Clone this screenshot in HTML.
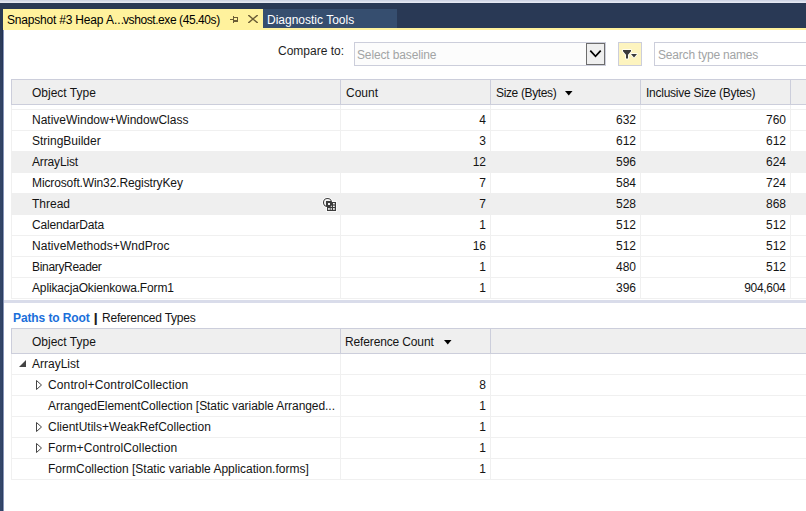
<!DOCTYPE html>
<html><head><meta charset="utf-8">
<style>
*{margin:0;padding:0;box-sizing:border-box}
html,body{width:806px;height:511px;overflow:hidden;background:#fff}
body{position:relative;font-family:"Liberation Sans",sans-serif;font-size:12px;color:#141414}
.a{position:absolute}
.t{position:absolute;white-space:nowrap;line-height:14px}
.r{text-align:right}
</style></head><body>
<!-- top chrome -->
<div class="a" style="left:0;top:0;width:806px;height:1px;background:#cfd5e5"></div><div class="a" style="left:0;top:1px;width:806px;height:1px;background:#dadfeb"></div><div class="a" style="left:0;top:2px;width:806px;height:1px;background:#e5e8f3"></div>
<div class="a" style="left:0;top:3px;width:806px;height:25px;background:#293955"></div>
<div class="a" style="left:0;top:28px;width:2px;height:483px;background:linear-gradient(#2b3a57 0px,#324465 70px,#34476a 483px)"></div>
<div class="a" style="left:2px;top:28px;width:1px;height:483px;background:linear-gradient(#213052 0px,#2c3e60 70px,#2d3f62 483px)"></div>
<div class="a" style="left:3px;top:30px;width:1px;height:481px;background:#8896b9"></div>
<div class="a" style="left:3px;top:28px;width:803px;height:2px;background:#fff29d"></div>
<div class="a" style="left:3px;top:9px;width:260px;height:21px;background:#fff29d"></div>
<div class="t" style="left:7px;top:13px;color:#000;letter-spacing:-0.2px">Snapshot #3 Heap</div>
<div class="t" style="left:106px;top:13px;color:#000">A...</div>
<div class="t" style="left:123px;top:13px;color:#000;letter-spacing:-0.42px">vshost.exe (45.40s)</div>
<!-- pin icon -->
<svg class="a" style="left:230px;top:16px" width="8" height="7" viewBox="0 0 8 7" shape-rendering="crispEdges">
<rect x="0" y="3" width="3" height="1" fill="#6b5d36"/>
<rect x="3" y="0" width="1" height="7" fill="#6b5d36"/>
<rect x="4" y="1" width="4" height="1" fill="#6b5d36"/>
<rect x="7" y="1" width="1" height="5" fill="#6b5d36"/>
<rect x="4" y="4" width="4" height="2" fill="#6b5d36"/>
</svg>
<!-- close icon -->
<svg class="a" style="left:248px;top:15px" width="10" height="8" viewBox="0 0 10 8">
<path d="M0.3 0L9.7 8M9.7 0L0.3 8" fill="none" stroke="#6b5d36" stroke-width="1.4"/>
</svg>
<div class="a" style="left:263px;top:9px;width:134px;height:19px;background:#364e6f"></div>
<div class="t" style="left:267px;top:13px;color:#fff">Diagnostic Tools</div>

<!-- toolbar -->
<div class="t" style="left:278px;top:44px;color:#1e1e1e">Compare to:</div>
<div class="a" style="left:354px;top:42px;width:252px;height:24px;border:1px solid #cccedb;background:#fcfcfc"></div>
<div class="t" style="left:357px;top:48px;color:#a2a4a5;letter-spacing:-0.14px">Select baseline</div>
<div class="a" style="left:586px;top:43px;width:19px;height:22px;border:1px solid #6d6d6d;background:#efefef"></div>
<svg class="a" style="left:588px;top:48px" width="15" height="12" viewBox="0 0 15 12">
<path d="M2.3 2.6L7.5 8.3L12.7 2.6" fill="none" stroke="#000" stroke-width="1.7"/>
</svg>
<div class="a" style="left:618px;top:42px;width:24px;height:24px;border:1px solid #cccedb;background:#fdf4bf"></div>
<svg class="a" style="left:620px;top:46px" width="20" height="16" viewBox="0 0 20 16">
<path d="M3 4H11V5.3L8 8.8V12.6H6V8.8L3 5.3Z" fill="#3a3a3a" stroke="#fff" stroke-width="1.6" paint-order="stroke" stroke-linejoin="round"/>
<path d="M11 8H17L14 11.5Z" fill="#3a3a3a" stroke="#fff" stroke-width="1.4" paint-order="stroke" stroke-linejoin="round"/>
</svg>
<div class="a" style="left:654px;top:42px;width:160px;height:24px;border:1px solid #cccedb;background:#fff"></div>
<div class="t" style="left:658px;top:48px;color:#a2a4a5;letter-spacing:-0.19px">Search type names</div>

<!-- grid 1 header -->
<div class="a" style="left:11px;top:79px;width:800px;height:26px;border:1px solid #cccedb;background:#efefef"></div>
<div class="a" style="left:340px;top:80px;width:1px;height:24px;background:#cccedb"></div>
<div class="a" style="left:490px;top:80px;width:1px;height:24px;background:#cccedb"></div>
<div class="a" style="left:640px;top:80px;width:1px;height:24px;background:#cccedb"></div>
<div class="a" style="left:790px;top:80px;width:1px;height:24px;background:#cccedb"></div>
<div class="t" style="left:32px;top:86px">Object Type</div>
<div class="t" style="left:346px;top:86px">Count</div>
<div class="t" style="left:496px;top:86px;letter-spacing:-0.36px">Size (Bytes)</div>
<svg class="a" style="left:565px;top:91px" width="8" height="5" viewBox="0 0 8 5"><path d="M0 0H7.5L3.75 4.5Z" fill="#000"/></svg>
<div class="t" style="left:646px;top:86px;letter-spacing:-0.25px">Inclusive Size (Bytes)</div>

<!-- grid 1 body -->
<!--G1-->
<div class="a" style="left:11px;top:105px;width:1px;height:194px;background:#f0f0f0"></div>
<div class="a" style="left:340px;top:105px;width:1px;height:194px;background:#f0f0f0"></div>
<div class="a" style="left:490px;top:105px;width:1px;height:194px;background:#f0f0f0"></div>
<div class="a" style="left:640px;top:105px;width:1px;height:194px;background:#f0f0f0"></div>
<div class="a" style="left:790px;top:105px;width:1px;height:194px;background:#f0f0f0"></div>
<div class="a" style="left:11px;top:109px;width:795px;height:1px;background:#f0f0f0"></div>
<div class="a" style="left:11px;top:130px;width:795px;height:1px;background:#f0f0f0"></div>
<div class="a" style="left:11px;top:151px;width:795px;height:1px;background:#f0f0f0"></div>
<div class="a" style="left:11px;top:172px;width:795px;height:1px;background:#f0f0f0"></div>
<div class="a" style="left:11px;top:193px;width:795px;height:1px;background:#f0f0f0"></div>
<div class="a" style="left:11px;top:214px;width:795px;height:1px;background:#f0f0f0"></div>
<div class="a" style="left:11px;top:235px;width:795px;height:1px;background:#f0f0f0"></div>
<div class="a" style="left:11px;top:256px;width:795px;height:1px;background:#f0f0f0"></div>
<div class="a" style="left:11px;top:277px;width:795px;height:1px;background:#f0f0f0"></div>
<div class="a" style="left:11px;top:298px;width:795px;height:1px;background:#f0f0f0"></div>
<div class="t" style="left:32px;top:113px;letter-spacing:0px">NativeWindow+WindowClass</div>
<div class="t r" style="left:340px;width:146px;top:113px">4</div>
<div class="t r" style="left:490px;width:146px;top:113px">632</div>
<div class="t r" style="left:640px;width:146px;top:113px">760</div>
<div class="t" style="left:32px;top:134px;letter-spacing:0px">StringBuilder</div>
<div class="t r" style="left:340px;width:146px;top:134px">3</div>
<div class="t r" style="left:490px;width:146px;top:134px">612</div>
<div class="t r" style="left:640px;width:146px;top:134px">612</div>
<div class="a" style="left:11px;top:151px;width:795px;height:22px;background:#efefef"></div>
<div class="t" style="left:32px;top:155px;letter-spacing:-0.15px">ArrayList</div>
<div class="t r" style="left:340px;width:146px;top:155px">12</div>
<div class="t r" style="left:490px;width:146px;top:155px">596</div>
<div class="t r" style="left:640px;width:146px;top:155px">624</div>
<div class="t" style="left:32px;top:176px;letter-spacing:-0.12px">Microsoft.Win32.RegistryKey</div>
<div class="t r" style="left:340px;width:146px;top:176px">7</div>
<div class="t r" style="left:490px;width:146px;top:176px">584</div>
<div class="t r" style="left:640px;width:146px;top:176px">724</div>
<div class="a" style="left:11px;top:193px;width:795px;height:22px;background:#efefef"></div>
<div class="t" style="left:32px;top:197px;letter-spacing:0px">Thread</div>
<div class="t r" style="left:340px;width:146px;top:197px">7</div>
<div class="t r" style="left:490px;width:146px;top:197px">528</div>
<div class="t r" style="left:640px;width:146px;top:197px">868</div>
<div class="t" style="left:32px;top:218px;letter-spacing:-0.18px">CalendarData</div>
<div class="t r" style="left:340px;width:146px;top:218px">1</div>
<div class="t r" style="left:490px;width:146px;top:218px">512</div>
<div class="t r" style="left:640px;width:146px;top:218px">512</div>
<div class="t" style="left:32px;top:239px;letter-spacing:0.06px">NativeMethods+WndProc</div>
<div class="t r" style="left:340px;width:146px;top:239px">16</div>
<div class="t r" style="left:490px;width:146px;top:239px">512</div>
<div class="t r" style="left:640px;width:146px;top:239px">512</div>
<div class="t" style="left:32px;top:260px;letter-spacing:-0.32px">BinaryReader</div>
<div class="t r" style="left:340px;width:146px;top:260px">1</div>
<div class="t r" style="left:490px;width:146px;top:260px">480</div>
<div class="t r" style="left:640px;width:146px;top:260px">512</div>
<div class="t" style="left:32px;top:281px;letter-spacing:-0.15px">AplikacjaOkienkowa.Form1</div>
<div class="t r" style="left:340px;width:146px;top:281px">1</div>
<div class="t r" style="left:490px;width:146px;top:281px">396</div>
<div class="t r" style="left:640px;width:146px;top:281px;letter-spacing:-0.3px;width:145.5px">904,604</div>
<svg class="a" style="left:318px;top:194px" width="24" height="20" viewBox="0 0 24 20">
<circle cx="9.5" cy="8.5" r="4" fill="none" stroke="#fff" stroke-width="3" opacity="0.7"/>
<rect x="8" y="7" width="11" height="11" fill="#fff" opacity="0.6"/>
<circle cx="9.5" cy="8.5" r="4" fill="none" stroke="#3c3c3c" stroke-width="1.1"/>
<rect x="9" y="8" width="9" height="9" fill="#3c3c3c"/>
<g fill="#f4f4f4"><rect x="15" y="9" width="1.8" height="1.4"/><rect x="12.6" y="11.6" width="1.3" height="1.4"/><rect x="15" y="11.6" width="1.8" height="1.4"/>
<rect x="10" y="14.1" width="1.8" height="1.7"/><rect x="12.6" y="14.1" width="1.3" height="1.7"/><rect x="15" y="14.1" width="1.8" height="1.7"/></g>
<rect x="8" y="7" width="5.3" height="5.5" fill="#3c3c3c"/>
<rect x="10" y="9" width="2" height="2" fill="#f4f4f4"/>
</svg>
<!--/G1-->

<!-- splitter -->
<div class="a" style="left:4px;top:300px;width:802px;height:3px;background:#d9dcea"></div>

<div class="t" style="left:13px;top:311px;color:#1a6fda;font-weight:bold;letter-spacing:-0.1px">Paths to Root</div>
<div class="t" style="left:94px;top:311px;color:#1e1e1e;font-weight:bold;transform:scaleX(1.3)">|</div>
<div class="t" style="left:102px;top:311px;letter-spacing:-0.23px">Referenced Types</div>

<!-- grid 2 header -->
<div class="a" style="left:11px;top:328px;width:800px;height:26px;border:1px solid #cccedb;background:#efefef"></div>
<div class="a" style="left:340px;top:329px;width:1px;height:24px;background:#cccedb"></div>
<div class="a" style="left:490px;top:329px;width:1px;height:24px;background:#cccedb"></div>
<div class="t" style="left:32px;top:335px">Object Type</div>
<div class="t" style="left:345px;top:335px;letter-spacing:-0.14px">Reference Count</div>
<svg class="a" style="left:444px;top:340px" width="8" height="5" viewBox="0 0 8 5"><path d="M0 0H7.5L3.75 4.5Z" fill="#000"/></svg>

<!--G2-->
<div class="a" style="left:11px;top:354px;width:1px;height:126px;background:#f0f0f0"></div>
<div class="a" style="left:340px;top:354px;width:1px;height:126px;background:#f0f0f0"></div>
<div class="a" style="left:490px;top:354px;width:1px;height:126px;background:#f0f0f0"></div>
<div class="a" style="left:11px;top:374px;width:795px;height:1px;background:#f0f0f0"></div>
<div class="a" style="left:11px;top:395px;width:795px;height:1px;background:#f0f0f0"></div>
<div class="a" style="left:11px;top:416px;width:795px;height:1px;background:#f0f0f0"></div>
<div class="a" style="left:11px;top:437px;width:795px;height:1px;background:#f0f0f0"></div>
<div class="a" style="left:11px;top:458px;width:795px;height:1px;background:#f0f0f0"></div>
<div class="a" style="left:11px;top:479px;width:795px;height:1px;background:#f0f0f0"></div>
<div class="t" style="left:32px;top:357px;letter-spacing:0px">ArrayList</div>
<svg class="a" style="left:19px;top:360px" width="8" height="8" viewBox="0 0 8 8"><path d="M0 7H7V0Z" fill="#444"/></svg>
<div class="t" style="left:48px;top:378px;letter-spacing:0.13px">Control+ControlCollection</div>
<div class="t r" style="left:340px;width:146px;top:378px">8</div>
<svg class="a" style="left:35px;top:379px" width="8" height="12" viewBox="0 0 8 12"><path d="M1.5 1.5L6.5 6L1.5 10.5Z" fill="none" stroke="#444" stroke-width="1"/></svg>
<div class="t" style="left:48px;top:399px;letter-spacing:-0.06px">ArrangedElementCollection [Static variable Arranged...</div>
<div class="t r" style="left:340px;width:146px;top:399px">1</div>
<div class="t" style="left:48px;top:420px;letter-spacing:0px">ClientUtils+WeakRefCollection</div>
<div class="t r" style="left:340px;width:146px;top:420px">1</div>
<svg class="a" style="left:35px;top:421px" width="8" height="12" viewBox="0 0 8 12"><path d="M1.5 1.5L6.5 6L1.5 10.5Z" fill="none" stroke="#444" stroke-width="1"/></svg>
<div class="t" style="left:48px;top:441px;letter-spacing:0.13px">Form+ControlCollection</div>
<div class="t r" style="left:340px;width:146px;top:441px">1</div>
<svg class="a" style="left:35px;top:442px" width="8" height="12" viewBox="0 0 8 12"><path d="M1.5 1.5L6.5 6L1.5 10.5Z" fill="none" stroke="#444" stroke-width="1"/></svg>
<div class="t" style="left:48px;top:462px;letter-spacing:0px">FormCollection [Static variable Application.forms]</div>
<div class="t r" style="left:340px;width:146px;top:462px">1</div>
<!--/G2-->
</body></html>
